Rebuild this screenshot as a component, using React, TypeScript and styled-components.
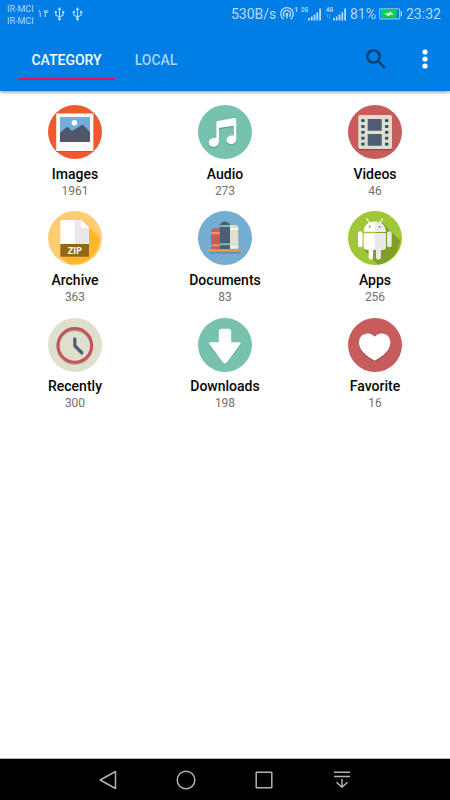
import React from "react";
import styled, { createGlobalStyle } from "styled-components";

const GlobalStyle = createGlobalStyle`
  * { box-sizing: border-box; }
  body { margin: 0; background: #fff; font-family: Roboto, "Liberation Sans", sans-serif; }
  svg { display: block; flex: none; }
`;

const Screen = styled.div`
  width: 450px;
  height: 800px;
  display: flex;
  flex-direction: column;
  overflow: hidden;
  background: #fff;
`;

const Header = styled.header`
  flex: none;
  height: 91px;
  background: #007ee6;
  box-shadow: 0 1px 4px rgba(0, 0, 0, 0.45);
`;

const StatusBar = styled.div`
  height: 28px;
  display: flex;
  justify-content: space-between;
  color: #b5d9f8;
  padding: 0 9px 0 7px;
`;

const StatusGroup = styled.div`
  display: flex;
  align-items: center;
`;

const UsbGroup = styled.div`
  display: flex;
  gap: 7px;
`;

const Carriers = styled.div`
  width: 27px;
  font-size: 9px;
  line-height: 12px;
  white-space: nowrap;
  padding-top: 1px;
`;

const PersianCount = styled.span`
  width: 12px;
  margin: 0 5px 0 3px;
  font: 11px/14px "DejaVu Sans", sans-serif;
`;

const StatusText = styled.span<{ $width: number }>`
  width: ${(p) => p.$width}px;
  font-size: 14px;
  line-height: 28px;
  white-space: nowrap;
`;

const Toolbar = styled.div`
  height: 63px;
  display: flex;
  justify-content: space-between;
  padding: 0 17px 0 18px;
`;

const Tabs = styled.nav`
  display: flex;
  align-items: flex-start;
  padding-top: 11px;
`;

const Tab = styled.button<{ $active?: boolean }>`
  height: 41px;
  width: ${(p) => (p.$active ? 97 : 76)}px;
  padding: 2px 0 0;
  border: 0;
  border-bottom: 2px solid ${(p) => (p.$active ? "#e80c5c" : "transparent")};
  margin-right: 3px;
  background: none;
  color: ${(p) => (p.$active ? "#fff" : "#acd4f7")};
  font: 500 14px/16px Roboto, sans-serif;
  text-align: center;
`;

const Actions = styled.div`
  display: flex;
  align-items: center;
  gap: 31px;
  padding-bottom: 1px;
`;

const Grid = styled.main`
  flex: 1;
  display: grid;
  grid-template-columns: repeat(3, 150px);
  grid-auto-rows: 106.2px;
  padding-top: 14.3px;
`;

const Category = styled.div`
  display: flex;
  flex-direction: column;
  align-items: center;
`;

const Label = styled.div`
  margin-top: 6.5px;
  color: #080808;
  font-size: 14px;
  font-weight: 500;
  line-height: 17px;
`;

const Count = styled.div`
  color: #717171;
  font-size: 12px;
  line-height: 16px;
`;

const NavBar = styled.footer`
  flex: none;
  height: 42px;
  display: flex;
  justify-content: center;
  align-items: center;
  gap: 54px;
  background: #000;
  border-top: 1px solid #b5b5b5;
`;

const Usb = () => (
  <svg width="11" height="14" viewBox="0 0 11 14" fill="none" stroke="#b5d9f8" strokeWidth="1.1">
    <path d="M5.5 2v10M1.8 5v3l3.7 2.2M9.2 5v3l-3.7 2.2" />
    <path d="M5.5 0 7.5 3h-4z" fill="#b5d9f8" stroke="none" />
    <circle cx="5.5" cy="12" r="1.5" fill="#b5d9f8" stroke="none" />
    <circle cx="1.8" cy="5" r="1.2" fill="#b5d9f8" stroke="none" />
    <path d="M8.1 3.9h2.2v2.2H8.1z" fill="#b5d9f8" stroke="none" />
  </svg>
);

const Hotspot = () => (
  <svg width="20" height="18" viewBox="0 0 20 18" fill="none" stroke="#b5d9f8" strokeWidth="1.35">
    <path d="M3.5 14.2a6.3 6.3 0 1 1 7 0M4.7 11.7a3.6 3.6 0 1 1 4.6 0" />
    <circle cx="7" cy="9.5" r="1.4" fill="#b5d9f8" stroke="none" />
    <path d="M7 9.5v4" />
    <text x="14.3" y="7.2" fill="#b5d9f8" stroke="none" fontFamily="Roboto" fontSize="7" fontWeight="700">1</text>
  </svg>
);

const Signal = ({ label, weak }: { label: string; weak?: boolean }) => (
  <svg width="25" height="18" viewBox="0 0 25 18" fill="#b5d9f8">
    <text x="1" y="7.2" fontFamily="Roboto" fontSize="6.5" fontWeight="700" textLength="7" lengthAdjust="spacingAndGlyphs">{label}</text>
    {weak && <path d="M2 9h1v4H2zm2 1h1v4H4z" opacity=".4" />}
    <path d="M8 13h1.8v2.5H8zM10.8 11.5h1.8v4h-1.8zM13.6 9.5h1.8v6h-1.8zM16.4 7.3h1.8v8.2h-1.8zM19.2 3.5H21v12h-1.8z" />
  </svg>
);

const Battery = () => (
  <svg width="27" height="12" viewBox="0 0 27 12">
    <rect x=".6" y=".9" width="20" height="10" rx=".8" fill="none" stroke="#8dc4ee" strokeWidth="1.1" />
    <path d="M2 2.1h15.7v7.5H2z" fill="#06d44a" />
    <path d="M5.5 5.7 10 4.9l.5-1.5 4.5 2.9-4.4.5-.5 1.4z" fill="#dcfff0" />
    <path d="M22.3 3.3v5" stroke="#b5d9f8" strokeWidth="1.3" />
  </svg>
);

const Disc = ({ color, children }: { color: string; children: React.ReactNode }) => (
  <svg width="54" height="54" viewBox="0 0 54 54">
    <circle cx="27" cy="27" r="27" fill={color} />
    {children}
  </svg>
);

const ImagesIcon = () => (
  <Disc color="#f0592e">
    <path d="M8.2 9h37.2v38H8.2z" fill="#c14a2b" opacity=".65" />
    <path d="M8.2 8.4h37.2V46H8.2z" fill="#fbfbfb" />
    <path d="M12 12h30v25H12z" fill="#70afdc" />
    <circle cx="26.4" cy="17.8" r="2.8" fill="#fff" />
    <path d="m12 28 7.3-6.4 4.7 4.5 10.7-6.6L42 27v10H12z" fill="#50576a" />
  </Disc>
);

const notePath =
  "M18.3 17.8q0-1.5 1.6-1.8l16.6-2.9q1.8-.3 1.8 1.6v19.1c0 3.4-2 5.4-4.9 5.4-2.8 0-4.8-1.7-4.8-4.1 0-3 2.7-5 7.2-4.5v-9.8L21 23.1v12.5c0 4-2.2 6.4-5.4 6.4-2.9 0-4.9-1.8-4.9-4.4 0-3.2 3.1-5.2 7.6-4.6z";

const AudioIcon = () => (
  <Disc color="#76c2af">
    <path d={notePath} fill="#579787" transform="translate(0 1)" />
    <path d={notePath} fill="#fff" />
  </Disc>
);

const VideosIcon = () => (
  <Disc color="#c75c5c">
    <rect x="10.2" y="11.3" width="33.8" height="34" rx="2" fill="#984545" />
    <rect x="10.2" y="10" width="33.8" height="34" rx="2" fill="#dedfcc" />
    <path d="M19.7 14h14v11.7h-14zM19.7 29h14v11.7h-14z" fill="#4f5d73" />
    {[14.2, 20.1, 25.9, 31.8, 37.7].map((y) => (
      <React.Fragment key={y}>
        <rect x="13.3" y={y} width="3.3" height="2.8" fill="#344c72" />
        <rect x="37" y={y} width="3.3" height="2.8" fill="#344c72" />
      </React.Fragment>
    ))}
  </Disc>
);

const ArchiveIcon = () => (
  <Disc color="#ffcc72">
    <path d="m41 16 10.8 10.8A27 27 0 0 1 20.5 53.2L13 45.7z" fill="#ffb52f" />
    <path d="M12.3 9H33l8 8v19H12.3z" fill="#fff" />
    <path d="M26.7 9H33l8 8v17H26.7z" fill="#e9e8e9" />
    <path d="M33 9v8h8z" fill="#fff" />
    <path d="M12.3 33H41v12.7H12.3z" fill="#936719" />
    <text x="26.8" y="42.6" textAnchor="middle" fill="#fff" fontFamily="Lato" fontSize="9.2" fontWeight="900" textLength="14" lengthAdjust="spacingAndGlyphs">ZIP</text>
  </Disc>
);

const DocumentsIcon = () => (
  <Disc color="#73add2">
    <path d="M10 39h34l-2 3.6H12z" fill="#598eb3" />
    <path d="M13 38V20q0-2.5 3-2.5h5.7V38z" fill="#c75c5c" />
    <path d="M32 38V14h5q3.3 0 3.3 3v21z" fill="#dedfcc" />
    <path d="M21.7 38V14q0-1.7 1.3-1.8 1.5-1.7 3.8-1.7t3.8 1.7Q32 12.3 32 14v24z" fill="#4f5d73" />
    <path d="M13 21h8.7v2.2H13zM13 33.4h8.7v1.8H13z" fill="#e59b5a" />
    <path d="M21.7 14H32v2.1H21.7zM21.7 32.2H32v2.1H21.7z" fill="#76c2af" />
    <path d="M32 17h8.3v2H32zM32 35h8.3v1.7H32z" fill="#f4f3e5" />
    <path d="M10 38h34v1.4L42.7 41H11.3L10 39.4z" fill="#e39657" />
  </Disc>
);

const AppsIcon = () => (
  <Disc color="#a0c737">
    <path d="M34.5 12 52 29.6A27 27 0 0 1 30 53.8L16 39z" fill="#7e9e27" />
    <path d="m18.7 7.7 3.3 5M34.7 7.7l-3.3 5" stroke="#f6f6f3" strokeWidth="1.2" strokeLinecap="round" />
    <path d="M15.7 20.8c0-6.4 4.8-10.2 11-10.2s11 3.8 11 10.2zM15.7 22.3h22V36q0 2.8-3 2.8h-2v7.4a2.2 2.2 0 0 1-4.5 0v-7.4h-3.1v7.4a2.2 2.2 0 0 1-4.5 0v-7.4h-2q-2.9 0-2.9-2.8z" fill="#fff" />
    <path d="M26.7 10.6c6.2 0 11 3.8 11 10.2h-11zM26.7 22.3h11V36q0 2.8-3 2.8h-2v7.4a2.2 2.2 0 0 1-4.5 0v-7.4h-1.5z" fill="#e9e9e9" />
    <rect x="10" y="20.3" width="4.5" height="16" rx="2.2" fill="#fff" />
    <rect x="39" y="20.3" width="4.7" height="16" rx="2.2" fill="#e9e9e9" />
    <circle cx="21.7" cy="15.8" r="1" fill="#83a52a" />
    <circle cx="31.7" cy="15.8" r="1" fill="#83a52a" />
  </Disc>
);

const RecentlyIcon = () => (
  <Disc color="#dedfcc">
    <g fill="none">
      <circle cx="26.8" cy="28.5" r="16.8" stroke="#aaab9a" strokeWidth="3" />
      <circle cx="26.8" cy="27.4" r="16.8" stroke="#c9525a" strokeWidth="3" />
      <path d="M26.8 21.5v7.2l7 7" stroke="#b0b2a6" strokeWidth="3.1" strokeLinecap="round" strokeLinejoin="round" />
      <path d="M26.8 20.7v6.9l7 7" stroke="#4f5d73" strokeWidth="3.1" strokeLinecap="round" strokeLinejoin="round" />
    </g>
  </Disc>
);

const arrowPath =
  "M20.7 14q0-3.2 3.2-3.2h6.2q3.2 0 3.2 3.2v10.3h7.6q3 .1 1.1 2.5L29 44.4q-2.1 2.5-4.2 0L11.7 26.8q-1.8-2.4 1.1-2.5h7.9z";

const DownloadsIcon = () => (
  <Disc color="#76c2af">
    <path d={arrowPath} fill="#579787" transform="translate(0 .9)" />
    <path d={arrowPath} fill="#fff" />
  </Disc>
);

const heartPath =
  "M26.7 18.8c2.2-2.6 4.7-3.4 7.2-3.3 5 .2 8.5 3.7 8.5 9.2 0 7.8-8 13.6-15.7 18-7.7-4.4-15.7-10.2-15.7-18 0-5.5 3.5-9 8.5-9.2 2.5-.1 5 .7 7.2 3.3z";

const FavoriteIcon = () => (
  <Disc color="#c75c5c">
    <path d={heartPath} fill="#984545" transform="translate(0 1)" />
    <path d={heartPath} fill="#fff" />
  </Disc>
);

const categories = [
  { name: "Images", count: 1961, Icon: ImagesIcon },
  { name: "Audio", count: 273, Icon: AudioIcon },
  { name: "Videos", count: 46, Icon: VideosIcon },
  { name: "Archive", count: 363, Icon: ArchiveIcon },
  { name: "Documents", count: 83, Icon: DocumentsIcon },
  { name: "Apps", count: 256, Icon: AppsIcon },
  { name: "Recently", count: 300, Icon: RecentlyIcon },
  { name: "Downloads", count: 198, Icon: DownloadsIcon },
  { name: "Favorite", count: 16, Icon: FavoriteIcon },
];

const navPaths = [
  "M19.5 3.5v17L4.2 12z",
  "M12 3.2a8.8 8.8 0 1 0 0 17.6 8.8 8.8 0 0 0 0-17.6z",
  "M4.2 4.2h15.6v15.6H4.2z",
  "M4 4.2h16M4 8.5h16M12 11v8M6.5 14.3l5.5 5 5.5-5",
];

export default function App() {
  return (
    <Screen>
      <GlobalStyle />
      <Header>
        <StatusBar>
          <StatusGroup>
            <Carriers>
              <div>IR-MCI</div>
              <div>IR-MCI</div>
            </Carriers>
            <PersianCount>۱۴</PersianCount>
            <UsbGroup>
              <Usb />
              <Usb />
            </UsbGroup>
          </StatusGroup>
          <StatusGroup>
            <StatusText $width={49}>530B/s</StatusText>
            <Hotspot />
            <Signal label="2G" />
            <Signal label="4G" weak />
            <StatusText $width={29}>81%</StatusText>
            <Battery />
            <StatusText $width={35}>23:32</StatusText>
          </StatusGroup>
        </StatusBar>
        <Toolbar>
          <Tabs>
            <Tab $active>CATEGORY</Tab>
            <Tab>LOCAL</Tab>
          </Tabs>
          <Actions>
            <svg width="20" height="20" viewBox="0 0 20 20" fill="none" stroke="#073e6c" strokeWidth="2.3">
              <circle cx="7.5" cy="7.5" r="6.2" />
              <path d="m12 12 7 7" />
            </svg>
            <svg width="16" height="22" viewBox="0 0 16 22" fill="#fff">
              <circle cx="8" cy="4" r="2.6" />
              <circle cx="8" cy="11" r="2.6" />
              <circle cx="8" cy="18" r="2.6" />
            </svg>
          </Actions>
        </Toolbar>
      </Header>
      <Grid>
        {categories.map(({ name, count, Icon }) => (
          <Category key={name}>
            <Icon />
            <Label>{name}</Label>
            <Count>{count}</Count>
          </Category>
        ))}
      </Grid>
      <NavBar>
        {navPaths.map((d) => (
          <svg key={d} width="24" height="24" viewBox="0 0 24 24" fill="none" stroke="#b2b2b2" strokeWidth="1.5" strokeLinejoin="round">
            <path d={d} />
          </svg>
        ))}
      </NavBar>
    </Screen>
  );
}
